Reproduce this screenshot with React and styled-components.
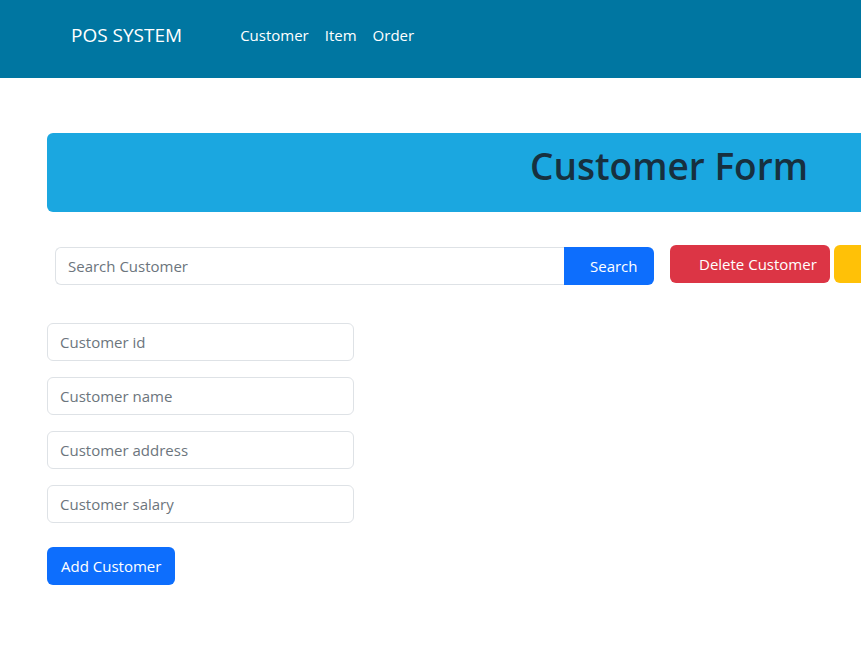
import { createGlobalStyle, styled } from "styled-components"

const GlobalStyle = createGlobalStyle`
    html, body {
        margin: 0;
        padding: 0;
        background: #fff;
        overflow: hidden;
    }
    body {
        font-family: "Open Sans", "Noto Sans", sans-serif;
        color: #212529;
    }
    * { box-sizing: border-box; }
`

const fields = ["Customer id", "Customer name", "Customer address", "Customer salary"]

const App = () => {
    return (
        <>
            <GlobalStyle />
            <NavBar>
                <Brand>POS SYSTEM</Brand>
                <NavLinks>
                    <NavLink>Customer</NavLink>
                    <NavLink>Item</NavLink>
                    <NavLink>Order</NavLink>
                </NavLinks>
            </NavBar>

            <Main>
                <Banner>
                    <h1>Customer Form</h1>
                </Banner>

                <ActionRow>
                    <SearchGroup>
                        <SearchInput placeholder="Search Customer" />
                        <SearchButton>Search</SearchButton>
                    </SearchGroup>
                    <Button $variant="danger">Delete Customer</Button>
                    <Button $variant="warning">Update Customer</Button>
                </ActionRow>

                <Form>
                    {fields.map(f => (
                        <Field key={f} placeholder={f} />
                    ))}
                    <Button $variant="primary" $small>Add Customer</Button>
                </Form>
            </Main>
        </>
    )
}

export default App

const NavBar = styled.nav`
    height: 78px;
    background: #0076a1;
    display: flex;
    align-items: center;
    padding: 0 0 8px 71px;
`

const Brand = styled.span`
    color: #fff;
    font-size: 19px;
    margin-right: 58px;
`

const NavLinks = styled.div`
    display: flex;
    gap: 16px;
`

const NavLink = styled.a`
    color: #fff;
    font-size: 15px;
    cursor: pointer;
`

const Main = styled.main`
    padding: 55px 0 0 47px;
`

const Banner = styled.div`
    width: 1244px;
    height: 79px;
    background: #1ba7e0;
    border-radius: 6px;
    display: flex;
    align-items: center;
    justify-content: center;
    padding-bottom: 14px;

    h1 {
        margin: 0;
        font-size: 37px;
        font-weight: 600;
        color: #17303f;
    }
`

const ActionRow = styled.div`
    display: flex;
    align-items: center;
    gap: 4px;
    margin-top: 31px;
    padding-left: 8px;
    width: 1300px;
`

const SearchGroup = styled.div`
    display: flex;
    width: 599px;
    margin-right: 12px;
    margin-top: 4px;
`

const SearchInput = styled.input`
    flex: 1;
    height: 38px;
    border: 1px solid #dee2e6;
    border-right: none;
    border-radius: 6px 0 0 6px;
    padding: 0 12px;
    font-family: inherit;
    font-size: 15px;
    outline: none;

    &::placeholder { color: #6c757d; }
`

const SearchButton = styled.button`
    width: 90px;
    height: 38px;
    padding: 0 10px 0 26px;
    background: #0d6efd;
    color: #fff;
    border: none;
    border-radius: 0 6px 6px 0;
    font-family: inherit;
    font-size: 15px;
    text-align: left;
`

const variants = {
    danger: "#dc3545",
    warning: "#ffc107",
    primary: "#0d6efd",
}

const Button = styled.button`
    height: 38px;
    padding: ${({ $small }) => $small ? "0 14px" : "0 13px 0 29px"};
    background: ${({ $variant }) => variants[$variant]};
    color: ${({ $variant }) => $variant === "warning" ? "#000" : "#fff"};
    border: none;
    border-radius: 6px;
    font-family: inherit;
    font-size: 15px;
    white-space: nowrap;
    align-self: ${({ $small }) => $small ? "flex-start" : "auto"};
`

const Form = styled.div`
    display: flex;
    flex-direction: column;
    gap: 16px;
    margin-top: 38px;
    width: 307px;

    & > button {
        margin-top: 8px;
    }
`

const Field = styled.input`
    height: 38px;
    border: 1px solid #dee2e6;
    border-radius: 6px;
    padding: 0 12px;
    font-family: inherit;
    font-size: 15px;
    outline: none;

    &::placeholder { color: #6c757d; }
`
